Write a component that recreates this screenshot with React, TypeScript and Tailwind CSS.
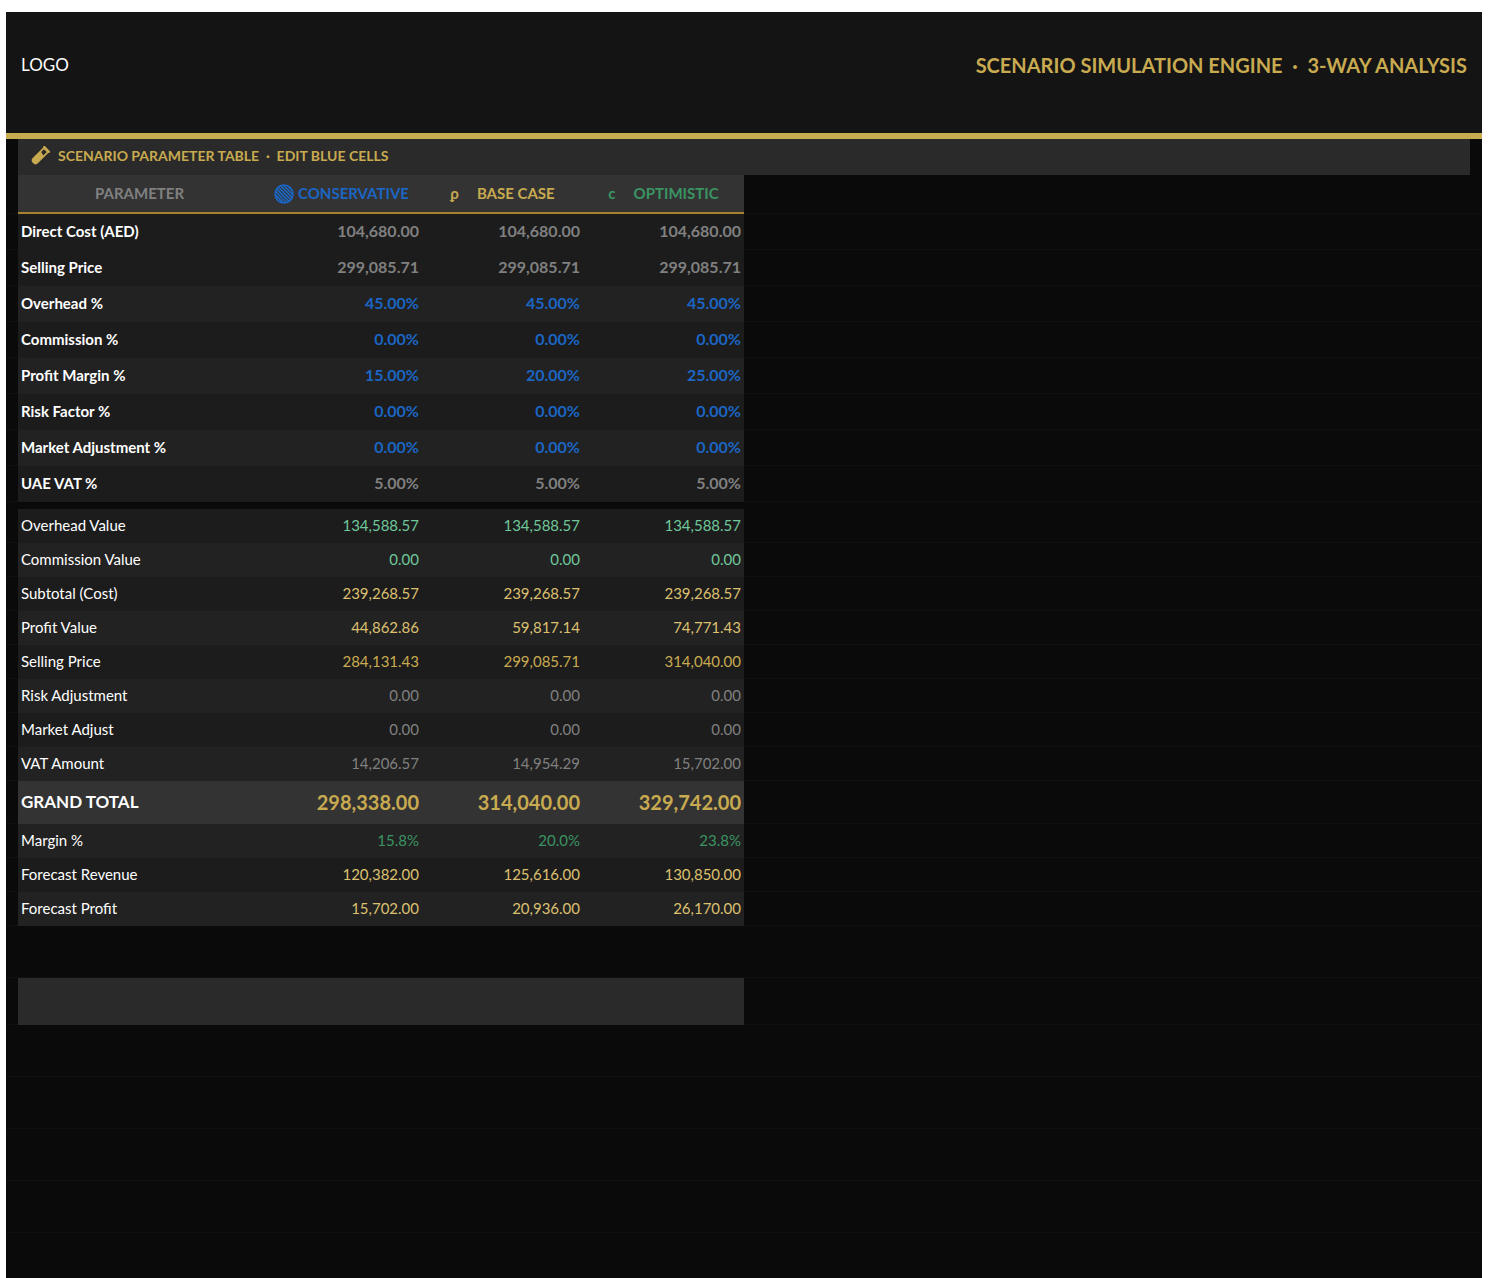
import React, { useState } from "react";

const scenarios = ["Conservative", "Base case", "Optimistic"];

const inputRows = [
  { label: "Direct Cost (AED)", values: ["104,680.00", "104,680.00", "104,680.00"], editable: false, bg: "bg-[#1c1c1c]" },
  { label: "Selling Price", values: ["299,085.71", "299,085.71", "299,085.71"], editable: false, bg: "bg-[#1c1c1c]" },
  { label: "Overhead %", values: ["45.00%", "45.00%", "45.00%"], editable: true, bg: "bg-[#222222]" },
  { label: "Commission %", values: ["0.00%", "0.00%", "0.00%"], editable: true, bg: "bg-[#1c1c1c]" },
  { label: "Profit Margin %", values: ["15.00%", "20.00%", "25.00%"], editable: true, bg: "bg-[#222222]" },
  { label: "Risk Factor %", values: ["0.00%", "0.00%", "0.00%"], editable: true, bg: "bg-[#1c1c1c]" },
  { label: "Market Adjustment %", values: ["0.00%", "0.00%", "0.00%"], editable: true, bg: "bg-[#222222]" },
  { label: "UAE VAT %", values: ["5.00%", "5.00%", "5.00%"], editable: false, bg: "bg-[#1c1c1c]" },
];

const resultRows = [
  { label: "Overhead Value", values: ["134,588.57", "134,588.57", "134,588.57"], color: "text-[#6fc79b]", bg: "bg-[#1c1c1c]" },
  { label: "Commission Value", values: ["0.00", "0.00", "0.00"], color: "text-[#6fc79b]", bg: "bg-[#222222]" },
  { label: "Subtotal (Cost)", values: ["239,268.57", "239,268.57", "239,268.57"], color: "text-[#dcc070]", bg: "bg-[#1c1c1c]" },
  { label: "Profit Value", values: ["44,862.86", "59,817.14", "74,771.43"], color: "text-[#dcc070]", bg: "bg-[#222222]" },
  { label: "Selling Price", values: ["284,131.43", "299,085.71", "314,040.00"], color: "text-[#c8aa50]", bg: "bg-[#1c1c1c]" },
  { label: "Risk Adjustment", values: ["0.00", "0.00", "0.00"], color: "text-[#808080]", bg: "bg-[#222222]" },
  { label: "Market Adjust", values: ["0.00", "0.00", "0.00"], color: "text-[#808080]", bg: "bg-[#1c1c1c]" },
  { label: "VAT Amount", values: ["14,206.57", "14,954.29", "15,702.00"], color: "text-[#808080]", bg: "bg-[#222222]" },
];

const grandTotal = ["298,338.00", "314,040.00", "329,742.00"];

const forecastRows = [
  { label: "Margin %", values: ["15.8%", "20.0%", "23.8%"], color: "text-[#3a9463]", bg: "bg-[#222222]" },
  { label: "Forecast Revenue", values: ["120,382.00", "125,616.00", "130,850.00"], color: "text-[#dcc070]", bg: "bg-[#1c1c1c]" },
  { label: "Forecast Profit", values: ["15,702.00", "20,936.00", "26,170.00"], color: "text-[#dcc070]", bg: "bg-[#222222]" },
];

function TestTubeIcon() {
  return (
    <svg viewBox="0 0 20 20" className="w-5 h-5" aria-hidden="true">
      <g transform="rotate(45 10 10)" fill="currentColor">
        <rect x="5.500" y="-0.500" width="9" height="2" rx="0.700" />
        <path fillRule="evenodd" d="M6.300 1h7.400v15.300a3.700 3.700 0 0 1-7.400 0zM8 2.500v3.800l4 1V2.500z" />
      </g>
    </svg>
  );
}

function HatchedCircle() {
  return (
    <svg viewBox="0 0 20 20" className="w-5 h-5" aria-hidden="true">
      <defs>
        <pattern id="hatch" width="2.500" height="2.500" patternUnits="userSpaceOnUse" patternTransform="rotate(-45)">
          <rect width="1.600" height="2.500" fill="#1b66c4" />
        </pattern>
      </defs>
      <circle cx="10" cy="10" r="9" fill="url(#hatch)" stroke="#1b66c4" strokeWidth="1.500" />
    </svg>
  );
}

// empty grid cell at either side of the sheet
function Blank({ span = 1 }: { span?: number }) {
  return <td colSpan={span} className="border-b border-[#101010]"></td>;
}

function ValueRow({ row }: { row: (typeof resultRows)[number] }) {
  return (
    <tr className="h-[34px] text-[15px]">
      <Blank />
      <th scope="row" className={`pl-[3px] pb-0.5 text-left font-normal text-white ${row.bg}`}>
        {row.label}
      </th>
      {row.values.map((value, i) => (
        <td key={i} className={`pr-[3px] pb-0.5 text-right ${row.color} ${row.bg}`}>
          {value}
        </td>
      ))}
      <Blank span={2} />
    </tr>
  );
}

export default function App() {
  const [inputs, setInputs] = useState(inputRows.map((row) => row.values));

  const handleChange = (r: number, c: number, value: string) => {
    setInputs(inputs.map((row, i) => (i === r ? row.map((v, j) => (j === c ? value : v)) : row)));
  };

  return (
    <div className="min-h-screen flex flex-col bg-white pt-3 pl-1.5 pr-[18px] font-['Lato',sans-serif]">
      <div className="flex-1 bg-[#0a0a0a]">
        <header className="flex items-center justify-between h-[127px] px-[15px] pb-4 bg-[#141414] border-b-6 border-[#c8aa50]">
          <span className="text-[17px] text-white">LOGO</span>
          <h1 className="text-xl font-bold text-[#c8aa50] whitespace-pre">
            {"SCENARIO SIMULATION ENGINE  ·  3-WAY ANALYSIS"}
          </h1>
        </header>

        <table className="w-full table-fixed border-separate border-spacing-0">
          <colgroup>
            <col className="w-3" />
            <col className="w-[243px]" />
            <col className="w-[161px]" />
            <col className="w-[161px]" />
            <col className="w-[161px]" />
            <col />
            <col className="w-3" />
          </colgroup>
          <thead>
            <tr className="h-9">
              <td></td>
              <th colSpan={5} className="pl-3 pb-0.5 bg-[#2a2a2a] text-left text-sm font-bold text-[#c8aa50]">
                <div className="flex items-center gap-2 whitespace-pre">
                  <TestTubeIcon />
                  {"SCENARIO PARAMETER TABLE  ·  EDIT BLUE CELLS"}
                </div>
              </th>
              <td></td>
            </tr>
            <tr className="h-[39px] text-[15px]">
              <Blank />
              <th scope="col" className="bg-[#333333] border-b-2 border-[#a9822f] text-[#808080]">
                PARAMETER
              </th>
              <th scope="col" className="bg-[#333333] border-b-2 border-[#a9822f] text-[#1b66c4]">
                <div className="flex items-center justify-center gap-1">
                  <HatchedCircle />
                  CONSERVATIVE
                </div>
              </th>
              <th scope="col" className="bg-[#333333] border-b-2 border-[#a9822f] text-[#c8aa50]">
                <div className="flex items-center justify-center gap-[18px]">
                  <span>ϼ</span>
                  BASE CASE
                </div>
              </th>
              <th scope="col" className="bg-[#333333] border-b-2 border-[#a9822f] text-[#3a9463]">
                <div className="flex items-center justify-center gap-[18px]">
                  <span>c</span>
                  OPTIMISTIC
                </div>
              </th>
              <Blank span={2} />
            </tr>
          </thead>
          <tbody>
            {inputRows.map((row, r) => (
              <tr key={row.label} className="h-9 text-base font-bold">
                <Blank />
                <th scope="row" className={`pl-[3px] pb-0.5 text-left text-[15px] text-white ${row.bg}`}>
                  {row.label}
                </th>
                {inputs[r].map((value, c) => (
                  <td key={c} className={`pr-[3px] pb-0.5 text-right text-[#808080] ${row.bg}`}>
                    {row.editable ? (
                      <input
                        type="text"
                        aria-label={`${row.label} ${scenarios[c]}`}
                        value={value}
                        onChange={(e) => handleChange(r, c, e.target.value)}
                        className="block w-full bg-transparent text-right text-[#1b66c4] focus:outline-none"
                      />
                    ) : (
                      value
                    )}
                  </td>
                ))}
                <Blank span={2} />
              </tr>
            ))}
            <tr className="h-[7px]">
              <td colSpan={7}></td>
            </tr>
          </tbody>
          <tbody>
            {resultRows.map((row) => (
              <ValueRow key={row.label} row={row} />
            ))}
            <tr className="h-[43px] text-xl font-bold">
              <Blank />
              <th scope="row" className="pl-[3px] pb-0.5 bg-[#333333] text-left text-[17px] text-white">
                GRAND TOTAL
              </th>
              {grandTotal.map((value) => (
                <td key={value} className="pr-[3px] pb-0.5 bg-[#333333] text-right text-[#c8aa50]">
                  {value}
                </td>
              ))}
              <Blank span={2} />
            </tr>
            {forecastRows.map((row) => (
              <ValueRow key={row.label} row={row} />
            ))}
          </tbody>
          <tbody>
            <tr className="h-[52px]">
              <Blank span={7} />
            </tr>
            <tr className="h-[47px]">
              <Blank />
              <td colSpan={4} className="bg-[#2a2a2a]"></td>
              <Blank span={2} />
            </tr>
            {[1, 2, 3, 4].map((n) => (
              <tr key={n} className="h-[52px]">
                <Blank span={7} />
              </tr>
            ))}
          </tbody>
        </table>
      </div>
    </div>
  );
}
